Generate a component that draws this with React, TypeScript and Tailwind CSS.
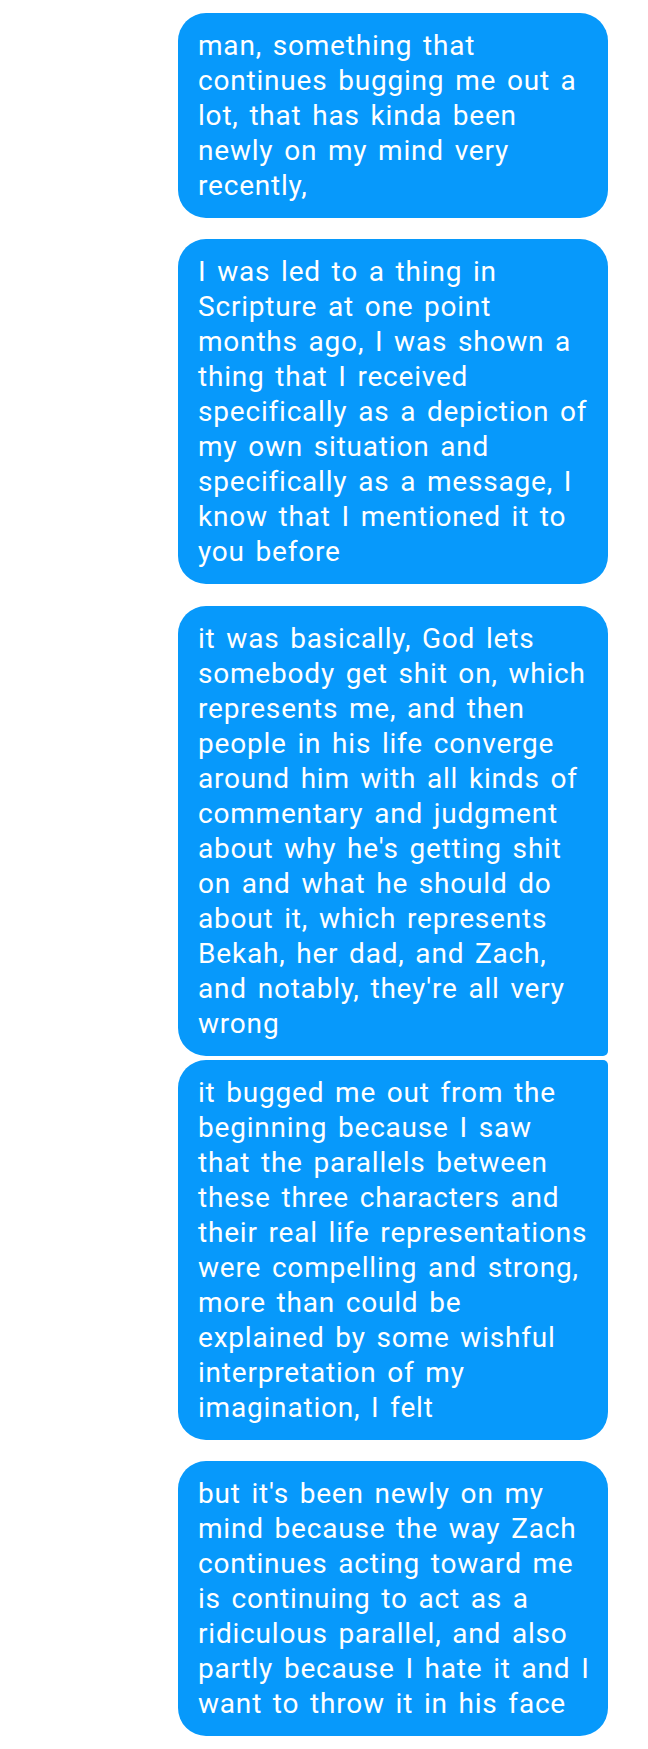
const messages: { lines: string[]; round: string; gap: string }[] = [
  {
    lines: [
      "man, something that",
      "continues bugging me out a",
      "lot, that has kinda been",
      "newly on my mind very",
      "recently,",
    ],
    round: "rounded-[28px]",
    gap: "mb-[21px]",
  },
  {
    lines: [
      "I was led to a thing in",
      "Scripture at one point",
      "months ago, I was shown a",
      "thing that I received",
      "specifically as a depiction of",
      "my own situation and",
      "specifically as a message, I",
      "know that I mentioned it to",
      "you before",
    ],
    round: "rounded-[28px]",
    gap: "mb-[22px]",
  },
  {
    lines: [
      "it was basically, God lets",
      "somebody get shit on, which",
      "represents me, and then",
      "people in his life converge",
      "around him with all kinds of",
      "commentary and judgment",
      "about why he's getting shit",
      "on and what he should do",
      "about it, which represents",
      "Bekah, her dad, and Zach,",
      "and notably, they're all very",
      "wrong",
    ],
    round: "rounded-[28px] rounded-br-[5px]",
    gap: "mb-[4px]",
  },
  {
    lines: [
      "it bugged me out from the",
      "beginning because I saw",
      "that the parallels between",
      "these three characters and",
      "their real life representations",
      "were compelling and strong,",
      "more than could be",
      "explained by some wishful",
      "interpretation of my",
      "imagination, I felt",
    ],
    round: "rounded-[28px] rounded-tr-[5px]",
    gap: "mb-[21px]",
  },
  {
    lines: [
      "but it's been newly on my",
      "mind because the way Zach",
      "continues acting toward me",
      "is continuing to act as a",
      "ridiculous parallel, and also",
      "partly because I hate it and I",
      "want to throw it in his face",
    ],
    round: "rounded-[28px]",
    gap: "",
  },
];

export default function App() {
  return (
    <div className="min-h-[1749px] bg-white pt-[13px] pr-[40px] flex flex-col items-end font-['Roboto',sans-serif]">
      {messages.map((m, i) => (
        <div
          key={i}
          className={`w-[430px] bg-[#0799fb] text-white text-[28px] leading-[35px] tracking-[0.8px] [word-spacing:3px] px-[20px] py-[15px] ${m.round} ${m.gap}`}
        >
          {m.lines.map((l, j) => (
            <div key={j} className="whitespace-nowrap">
              {l}
            </div>
          ))}
        </div>
      ))}
    </div>
  );
}
